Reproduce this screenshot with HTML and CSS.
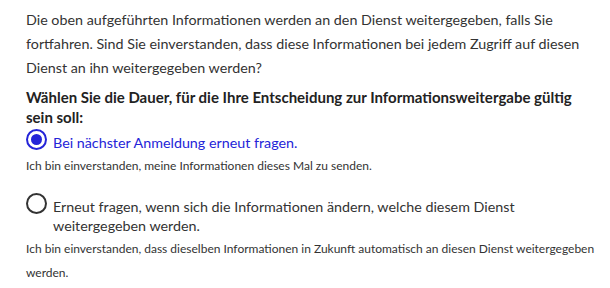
FILE: index.html
```html
<!DOCTYPE html>
<html lang="de">
<head>
    <meta charset="UTF-8">
    <meta name="viewport" content="width=device-width, initial-scale=1.0">
    <title>Zustimmung</title>
    <link rel="stylesheet" href="styles.css">
</head>
<body>
    <div class="consent">
        <p class="intro">Die oben aufgeführten Informationen werden an den Dienst weitergegeben, falls Sie fortfahren. Sind Sie einverstanden, dass diese Informationen bei jedem Zugriff auf diesen Dienst an ihn weitergegeben werden?</p>

        <p class="question">Wählen Sie die Dauer, für die Ihre Entscheidung zur Informationsweitergabe gültig sein soll:</p>

        <!-- Option 1 -->
        <label class="option selected">
            <input type="radio" name="dauer" checked>
            <span class="mark"></span>
            <span class="label-text">Bei nächster Anmeldung erneut fragen.</span>
        </label>
        <p class="hint">Ich bin einverstanden, meine Informationen dieses Mal zu senden.</p>

        <!-- Option 2 -->
        <label class="option">
            <input type="radio" name="dauer">
            <span class="mark"></span>
            <span class="label-text">Erneut fragen, wenn sich die Informationen ändern, welche diesem Dienst weitergegeben werden.</span>
        </label>
        <p class="hint">Ich bin einverstanden, dass dieselben Informationen in Zukunft automatisch an diesen Dienst weitergegeben werden.</p>
    </div>
</body>
</html>
```

FILE: styles.css
```css
body {
    margin: 0;
    background-color: #ffffff;
    color: #333333;
    font-family: "Segoe UI", Lato, sans-serif;
}
.consent {
    padding: 8px 8px 0 26px;
}
.intro {
    margin: 0;
    font-size: 14.3px;
    line-height: 24px;
}
.question {
    margin: 7px 0 0 0;
    font-size: 15px;
    font-weight: bold;
    line-height: 20px;
    color: #222222;
}
.option {
    display: flex;
    align-items: flex-start;
    gap: 6px;
    margin-top: 1px;
    font-size: 14.3px;
    line-height: 19px;
    cursor: pointer;
}
.option input { display: none; }
.option .mark {
    flex: none;
    box-sizing: border-box;
    width: 21px;
    height: 21px;
    margin-top: 1px;
    border: 2px solid #333333;
    border-radius: 50%;
    display: flex;
    align-items: center;
    justify-content: center;
}
.option .label-text { padding-top: 5px; }
.option.selected { color: #2424d8; }
.option.selected .mark { border-color: #2424d8; }
.option.selected .mark::after {
    content: "";
    width: 11px;
    height: 11px;
    border-radius: 50%;
    background-color: #2424d8;
}
.hint {
    margin: 2px 0 14px 0;
    font-size: 12px;
    line-height: 24px;
}
```
